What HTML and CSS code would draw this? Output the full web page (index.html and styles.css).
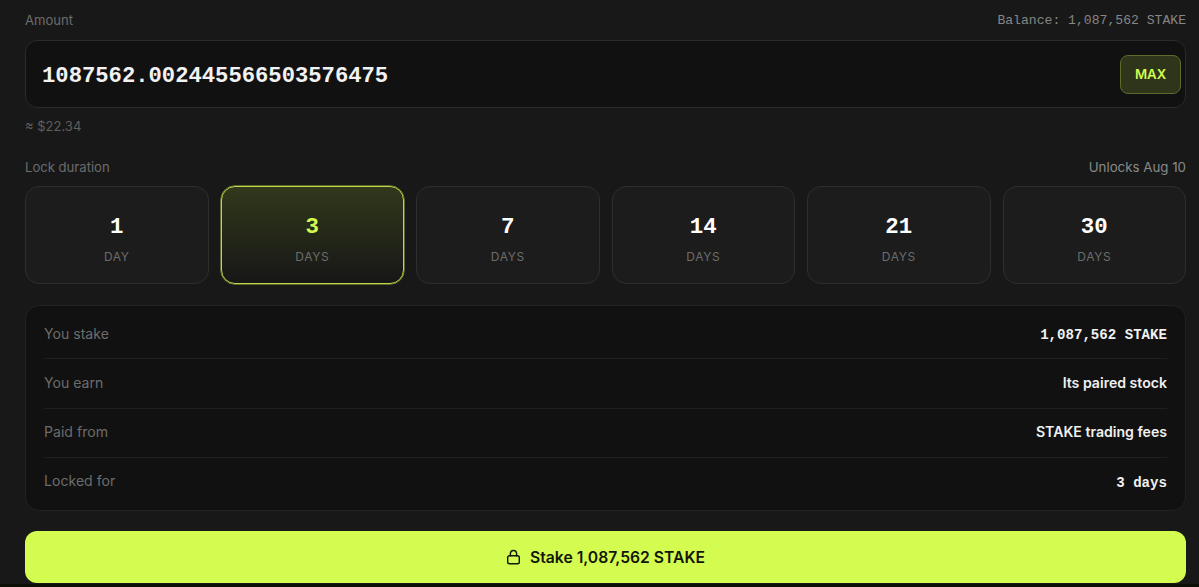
FILE: index.html
```html
<!DOCTYPE html>
<html lang="en">
<head>
  <meta charset="UTF-8" />
  <title>Stake</title>
  <link rel="stylesheet" href="styles.css">
</head>
<body>
<main class="stake-form">
  <div class="field-head">
    <span>Amount</span>
    <span class="mono balance">Balance: 1,087,562 STAKE</span>
  </div>
  <div class="amount-box">
    <span class="mono amount-value">1087562.002445566503576475</span>
    <button class="max-btn" type="button">MAX</button>
  </div>
  <div class="usd-value">≈ $22.34</div>

  <div class="field-head lock-head">
    <span>Lock duration</span>
    <span>Unlocks Aug 10</span>
  </div>
  <div class="duration-grid">
    <button class="duration" type="button"><span class="mono num">1</span><span class="unit">DAY</span></button>
    <button class="duration active" type="button"><span class="mono num">3</span><span class="unit">DAYS</span></button>
    <button class="duration" type="button"><span class="mono num">7</span><span class="unit">DAYS</span></button>
    <button class="duration" type="button"><span class="mono num">14</span><span class="unit">DAYS</span></button>
    <button class="duration" type="button"><span class="mono num">21</span><span class="unit">DAYS</span></button>
    <button class="duration" type="button"><span class="mono num">30</span><span class="unit">DAYS</span></button>
  </div>

  <div class="summary">
    <div class="row"><span>You stake</span><strong class="mono">1,087,562 STAKE</strong></div>
    <div class="row"><span>You earn</span><strong>Its paired stock</strong></div>
    <div class="row"><span>Paid from</span><strong>STAKE trading fees</strong></div>
    <div class="row"><span>Locked for</span><strong class="mono">3 days</strong></div>
  </div>

  <button class="cta-btn" type="button">
    <svg width="16" height="16" viewBox="0 0 16 16" fill="none" stroke="currentColor" stroke-width="1.4" stroke-linecap="round" stroke-linejoin="round"><rect x="1.7" y="6.7" width="11.6" height="8" rx="1.8"/><path d="M4.4 6.7V4.6a3.1 3.1 0 0 1 6.2 0v2.1"/></svg>
    Stake 1,087,562 STAKE
  </button>
</main>
</body>
</html>
```

FILE: styles.css
```css
:root {
  --bg: #181818;
  --well: #111111;
  --line: #2a2a2a;
  --muted: #6c6c6c;
  --lime: #d4fc50;
}
* { box-sizing: border-box; padding: 0; margin: 0; }
body {
  height: 587px;
  overflow: hidden;
  background: #0c0f04;
  font-family: Inter, 'Liberation Sans', sans-serif;
  color: #fff;
}
.mono { font-family: 'Liberation Mono', monospace; }
button { font-family: inherit; border: none; cursor: pointer; }

.stake-form {
  height: 584px;
  padding: 12px 13px 0 25px;
  background: var(--bg);
  display: flex;
  flex-direction: column;
}
.field-head {
  display: flex;
  justify-content: space-between;
  align-items: center;
  height: 16px;
  font-size: 13.1px;
  color: var(--muted);
}
.balance { color: #868686; font-size: 13.1px; }
.lock-head { margin-top: 24px; }
.lock-head span:last-child { color: #8a8a8a; font-size: 13.3px; }

.amount-box {
  margin-top: 12px;
  height: 68px;
  display: flex;
  align-items: center;
  justify-content: space-between;
  padding: 0 4px 0 16px;
  background: var(--well);
  border: 1px solid var(--line);
  border-radius: 12px;
}
.amount-value { padding-top: 4px; font-size: 22.2px; font-weight: 700; color: #f2f2f2; }
.max-btn {
  width: 61px;
  height: 39px;
  border: 1px solid #5c6b2a;
  border-radius: 8px;
  background: #2f351a;
  color: var(--lime);
  font-size: 13.2px;
  font-weight: 600;
}
.usd-value { margin-top: 11px; height: 16px; font-size: 13px; line-height: 15px; color: #5f5f5f; }

.duration-grid {
  margin-top: 11px;
  display: grid;
  grid-template-columns: repeat(6, 1fr);
  gap: 12px;
}
.duration {
  height: 98px;
  display: flex;
  flex-direction: column;
  align-items: center;
  background: #1c1c1c;
  border: 1px solid #2e2e2e;
  border-radius: 14px;
  color: #fff;
}
.duration.active {
  background: linear-gradient(180deg, #31381b 0%, #171717 100%);
  border-color: #bcd84a;
  box-shadow: 0 0 0 0.5px #9db33f;
}
.duration .num { margin-top: 27px; font-size: 22.4px; line-height: 26px; font-weight: 700; }
.duration.active .num { color: var(--lime); }
.duration .unit { margin-top: 9px; font-size: 12px; line-height: 16px; letter-spacing: 0.6px; color: #6c6c6c; }

.summary {
  margin-top: 21px;
  height: 206px;
  padding: 4px 18px;
  background: var(--well);
  border: 1px solid #222;
  border-radius: 14px;
  display: flex;
  flex-direction: column;
}
.row {
  flex: 1;
  display: flex;
  justify-content: space-between;
  align-items: center;
  padding-bottom: 2px;
  font-size: 14.1px;
  color: var(--muted);
  border-bottom: 1px solid #1f1f1f;
}
.row:last-child { border-bottom: none; }
.row strong { font-size: 14.1px; font-weight: 600; color: #f0f0f0; }
.row strong.mono { padding-top: 4px; font-weight: 700; font-size: 14.1px; }

.cta-btn {
  margin-top: 20px;
  height: 52px;
  flex-shrink: 0;
  display: flex;
  align-items: center;
  justify-content: center;
  gap: 8px;
  background: var(--lime);
  border-radius: 12px;
  color: #11150a;
  font-size: 15.7px;
  font-weight: 600;
}
```
